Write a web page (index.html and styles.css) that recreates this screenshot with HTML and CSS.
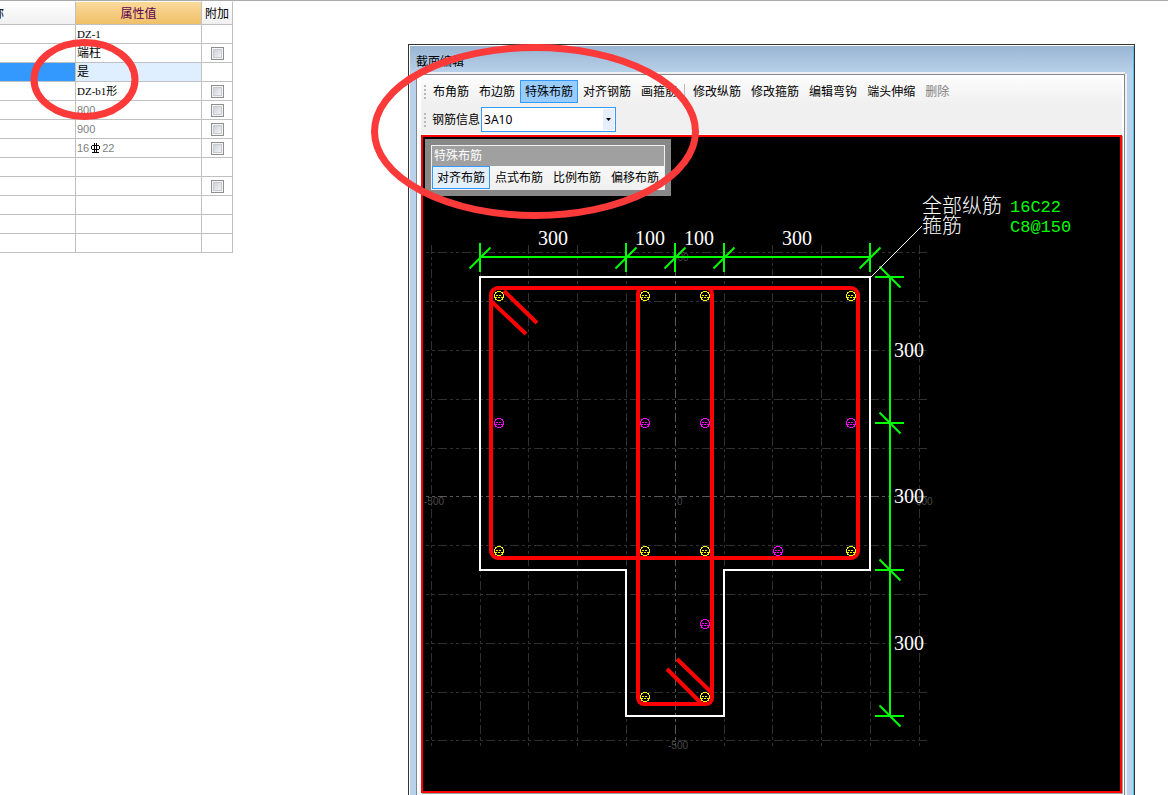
FILE: index.html
```html
<!DOCTYPE html>
<html lang="zh-CN">
<head>
<meta charset="utf-8">
<title>截面编辑</title>
<link rel="stylesheet" href="styles.css">
</head>
<body>
<main class="workspace">
  <section class="properties">
    <table class="prop-table">
      <colgroup><col class="col-name"><col class="col-value"><col class="col-extra"></colgroup>
      <thead>
        <tr><th class="head-name">称</th><th class="head-value">属性值</th><th>附加</th></tr>
      </thead>
      <tbody>
        <tr><td></td><td class="latin">DZ-1</td><td></td></tr>
        <tr><td></td><td>端柱</td><td class="check"><input type="checkbox" aria-label="附加 端柱"></td></tr>
        <tr class="selected"><td></td><td>是</td><td></td></tr>
        <tr><td></td><td class="latin">DZ-b1形</td><td class="check"><input type="checkbox" aria-label="附加 DZ-b1形"></td></tr>
        <tr><td></td><td class="number">800</td><td class="check"><input type="checkbox" aria-label="附加 800"></td></tr>
        <tr><td></td><td class="number">900</td><td class="check"><input type="checkbox" aria-label="附加 900"></td></tr>
        <tr><td></td><td class="number"><span class="rebar">16<svg class="grade" width="9" height="10" viewBox="0 0 9 10" aria-hidden="true"><path d="M1 2.5H8M1 6.5H8M.5 3V6M8.5 3V6M3.5 0V9M5.5 0V9M1 9.5H8"/></svg>22</span></td><td class="check"><input type="checkbox" aria-label="附加 纵筋"></td></tr>
        <tr><td></td><td></td><td></td></tr>
        <tr><td></td><td></td><td class="check"><input type="checkbox" aria-label="附加"></td></tr>
        <tr><td></td><td></td><td></td></tr>
        <tr><td></td><td></td><td></td></tr>
        <tr><td></td><td></td><td></td></tr>
      </tbody>
    </table>
  </section>

  <section class="window">
    <h1 class="title">截面编辑</h1>
    <div class="client">
      <div class="toolbars">
        <div class="toolbar">
          <span class="grip"></span>
          <button type="button">布角筋</button>
          <button type="button">布边筋</button>
          <button type="button" class="active">特殊布筋</button>
          <button type="button">对齐钢筋</button>
          <button type="button">画箍筋</button>
          <span class="separator"></span>
          <button type="button">修改纵筋</button>
          <button type="button">修改箍筋</button>
          <button type="button">编辑弯钩</button>
          <button type="button">端头伸缩</button>
          <button type="button" disabled>删除</button>
        </div>
        <div class="toolbar">
          <span class="grip"></span>
          <label class="info-label" for="rebar-info">钢筋信息</label>
          <div class="combo">
            <input id="rebar-info" type="text" value="3A10">
            <button type="button" class="drop" aria-label="展开"><svg width="5" height="3" viewBox="0 0 5 3" aria-hidden="true"><path d="M0 0H5L2.5 3Z"/></svg></button>
          </div>
        </div>
      </div>
      <div class="canvas">
        <svg class="drawing" aria-label="截面图">
          <defs>
            <g id="bar">
              <circle r="4.5"/>
              <path d="M-3 -.5H3M-4 1.5H4" stroke-dasharray="2 1"/>
            </g>
            <path id="tick-h" d="M0 -14V15M-10.500 11.500L10.500 -9.500"/>
            <path id="tick-v" d="M-15 0H14M-10.500 -10.500L10.500 10.500"/>
          </defs>
          <g transform="translate(-423 -137)">
            <path class="grid" d="M431.500 746V245M480.500 746V245M528.500 746V245M577.500 746V245M626.500 746V245M724.500 746V245M772.500 746V245M821.500 746V245M870.500 746V245M919.500 746V245M426 252.500H927M426 301.500H927M426 350.500H927M426 399.500H927M426 448.500H927M426 545.500H927M426 594.500H927M426 643.500H927M426 692.500H927M426 740.500H927"/>
            <path class="grid axis" d="M675.500 746V245M426 496.500H927"/>
            <g class="scale">
              <text x="424" y="505">-500</text>
              <text x="677" y="505">0</text>
              <text x="916" y="505">500</text>
              <text x="668" y="749">-500</text>
              <text x="672" y="261">500</text>
            </g>
            <path class="outline" d="M480 277H870V570H724V716H626V570H480Z"/>
            <g class="stirrup">
              <rect x="491" y="288" width="367" height="270" rx="7"/>
              <rect x="638" y="288" width="74" height="416" rx="6"/>
              <path d="M504 291L537 323M492 302L526 334M677 659L711 692M667 669L701 703"/>
            </g>
            <g class="corner-bars">
              <use href="#bar" x="499" y="296"/><use href="#bar" x="645" y="296"/><use href="#bar" x="705" y="296"/><use href="#bar" x="851" y="296"/>
              <use href="#bar" x="499" y="551"/><use href="#bar" x="645" y="551"/><use href="#bar" x="705" y="551"/><use href="#bar" x="851" y="551"/>
              <use href="#bar" x="645" y="697"/><use href="#bar" x="705" y="697"/>
            </g>
            <g class="side-bars">
              <use href="#bar" x="499" y="423"/><use href="#bar" x="645" y="423"/><use href="#bar" x="705" y="423"/><use href="#bar" x="851" y="423"/>
              <use href="#bar" x="778" y="551"/><use href="#bar" x="705" y="624"/>
            </g>
            <g class="dimension">
              <path d="M480 257H870M890 277V716"/>
              <use href="#tick-h" x="480" y="257"/><use href="#tick-h" x="626" y="257"/><use href="#tick-h" x="675" y="257"/><use href="#tick-h" x="724" y="257"/><use href="#tick-h" x="870" y="257"/>
              <use href="#tick-v" x="890" y="277"/><use href="#tick-v" x="890" y="423"/><use href="#tick-v" x="890" y="570"/><use href="#tick-v" x="890" y="716"/>
            </g>
            <path class="leader" d="M871 277L922 226"/>
            <g class="label">
              <text x="538" y="245">300</text>
              <text x="635" y="245">100</text>
              <text x="684" y="245">100</text>
              <text x="782" y="245">300</text>
              <text x="894" y="357">300</text>
              <text x="894" y="503">300</text>
              <text x="894" y="650">300</text>
              <text x="922" y="213">全部纵筋</text>
              <text x="922" y="233">箍筋</text>
            </g>
            <g class="spec">
              <text x="1010" y="212">16C22</text>
              <text x="1010" y="232">C8@150</text>
            </g>
          </g>
        </svg>
        <div class="palette">
          <div class="palette-box">
            <h2 class="palette-title">特殊布筋</h2>
            <div class="palette-tools">
              <button type="button" class="chosen">对齐布筋</button>
              <button type="button">点式布筋</button>
              <button type="button">比例布筋</button>
              <button type="button">偏移布筋</button>
            </div>
          </div>
        </div>
      </div>
    </div>
  </section>
</main>
<svg class="markup" aria-hidden="true">
  <ellipse cx="84.500" cy="79.500" rx="50.500" ry="37"/>
  <ellipse cx="535" cy="131.500" rx="160.500" ry="84"/>
</svg>
</body>
</html>
```
FILE: styles.css
```css
* { box-sizing: border-box; }

body {
  margin: 0;
  height: 100vh;
  overflow: hidden;
  background: #fff;
  color: #000;
  font: 12px/18px "Liberation Sans", "Noto Sans CJK SC", sans-serif;
  position: relative;
}

button, input { font: inherit; color: inherit; margin: 0; }

.workspace {
  display: flex;
  height: 100%;
  border-top: 1px solid #a9a9ae;
}

/* property grid */
.properties { flex: none; margin-right: 175px; }

.prop-table {
  border-collapse: separate;
  border-spacing: 0;
  table-layout: fixed;
  width: 233px;
}
.col-name { width: 76px; }
.col-value { width: 126px; }
.col-extra { width: 31px; }

.prop-table th, .prop-table td {
  padding: 0 0 0 1px;
  border-right: 1px solid #c0c0c0;
  border-bottom: 1px solid #c0c0c0;
  height: 19px;
  line-height: 18px;
  white-space: nowrap;
  overflow: hidden;
}
.prop-table th {
  height: 24px;
  padding: 2px 0 0;
  font-weight: 400;
  border-top: 1px solid #fff;
  background: linear-gradient(#fff, #f0f0f0);
}
.prop-table .head-name { text-align: left; text-indent: -8px; }
.prop-table .head-value { background: linear-gradient(#fbd99b, #f0c068); color: #5a0050; }
.prop-table .latin { font-family: "Liberation Serif", "Noto Sans CJK SC", serif; font-size: 11px; }
.prop-table .number { font-size: 11px; color: #808080; }
.prop-table .check { padding: 0; text-align: center; }
.prop-table .selected td:nth-child(1) { background: #3399ff; }
.prop-table .selected td:nth-child(2) { background: #e0efff; }

.rebar { display: flex; align-items: center; gap: 2px; }
.grade { fill: none; stroke: #000; stroke-width: 1; }

.check input {
  appearance: none;
  display: block;
  width: 13px;
  height: 13px;
  margin: 0 auto;
  border: 1px solid #8e8f8f;
  background: linear-gradient(135deg, #c4cad2, #fafafa);
  box-shadow: inset 0 0 0 1px #f4f4f4, inset 0 0 0 2px #c8ccd2;
}

/* editor window */
.window {
  flex: 1;
  min-width: 0;
  margin: 43px 33px 0 0;
  display: flex;
  flex-direction: column;
  padding: 1px 7px 0 7px;
  border: 1px solid #333;
  border-bottom: 0;
  background: linear-gradient(#98b4d2, #b9d1ea 28px);
  box-shadow: inset 1px 1px #fff, inset -1px 0 #4cc3ea;
}
.title {
  margin: 0;
  height: 26px;
  font-size: 12px;
  line-height: 32px;
  font-weight: 400;
}
.client {
  flex: 1;
  min-height: 0;
  display: flex;
  flex-direction: column;
  padding: 3px 2px 2px 4px;
  margin-top: 2px;
  border: 1px solid #85878f;
  border-bottom: 0;
  background: #fff;
  box-shadow: 2px 0 #f0f0f0, 0 -2px #f0f0f0;
  margin-right: 2px;
}
.toolbars {
  display: flex;
  flex-direction: column;
  gap: 4px;
  padding: 2px 0;
  margin-bottom: 1px;
  background: linear-gradient(#fcfcfc, #f0f0f0 45%);
}
.toolbar { display: flex; align-items: center; }
.grip {
  width: 2px;
  height: 14px;
  margin: 0 2px 0 3px;
  background: repeating-linear-gradient(#b8b8b8 0 2px, transparent 2px 4px);
}
.toolbar button, .palette-tools button {
  height: 23px;
  padding: 0 4px;
  border: 1px solid transparent;
  background: none;
  line-height: 20px;
  white-space: nowrap;
}
.toolbar button.active { border-color: #3399ff; background: #99ccff; }
.toolbar button:disabled { color: #808080; }
.separator { width: 1px; height: 15px; margin: 0 3px 0 2px; background: #bdbdbd; }

.info-label { padding: 0 1px 0 4px; }
.combo {
  display: flex;
  width: 135px;
  height: 25px;
  border: 1px solid #3399ff;
  background: #fff;
}
.combo input {
  flex: 1;
  min-width: 0;
  padding: 0 2px;
  border: 0;
  outline: 0;
  background: none;
  font-family: "Noto Sans", sans-serif;
}
.toolbar .drop {
  display: flex;
  align-items: center;
  justify-content: center;
  width: 11px;
  height: 21px;
  margin: 1px;
  padding: 0;
  border: 0;
  background: #e5eefa;
}

.canvas {
  flex: 1;
  min-height: 0;
  position: relative;
  border: 2px solid #f00;
  background: #000;
  box-shadow: 1px 1px #a0a0a0;
}
.drawing { display: block; width: 100%; height: 100%; }
.drawing path, .drawing rect, .drawing circle { fill: none; }
.grid { stroke: #303030; stroke-dasharray: 3 3 3 3 9 3; shape-rendering: crispEdges; }
.axis { stroke: #585858; }
.scale { fill: #4a4a4a; font: 10px "Liberation Sans", sans-serif; }
.outline { stroke: #fff; stroke-width: 2; }
.stirrup { stroke: #f00; stroke-width: 4; }
.corner-bars { stroke: #ff0; stroke-width: 1; shape-rendering: crispEdges; }
.side-bars { stroke: #f0f; stroke-width: 1; shape-rendering: crispEdges; }
.dimension { stroke: #0f0; stroke-width: 2; }
.leader { stroke: #fff; }
.label { fill: #fff; font: 300 20px "Liberation Serif", "Noto Sans CJK SC", serif; }
.spec { fill: #0f0; font: 17px "Liberation Mono", monospace; }

/* floating tool palette */
.palette {
  position: absolute;
  left: 2px;
  top: 2px;
  padding: 6px;
  background: #888;
}
.palette-box { border: 1px solid #f0f0f0; background: linear-gradient(#fff, #f0f0f0); }
.palette-title {
  margin: 0;
  padding: 0 2px;
  background: #a0a0a0;
  color: #fff;
  font-size: 12px;
  line-height: 20px;
  font-weight: 400;
}
.palette-tools { display: flex; }
.palette-tools .chosen { border-color: #3399ff; background: #e3effb; }

/* hand-drawn emphasis over everything */
.markup {
  position: absolute;
  left: 0;
  top: 0;
  width: 100%;
  height: 100%;
  pointer-events: none;
  fill: none;
  stroke: #fc3a3a;
  stroke-width: 7;
}
```
